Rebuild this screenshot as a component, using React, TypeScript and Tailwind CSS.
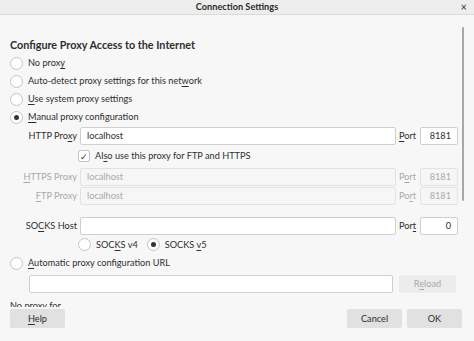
import type { ReactNode } from "react"

const U = ({ children }: { children: ReactNode }) => <span className="underline underline-offset-[2px]">{children}</span>

const Radio = ({ checked = false }: { checked?: boolean }) => (
  <span className="flex h-[13px] w-[13px] shrink-0 items-center justify-center rounded-full border border-[#c4c4c4] bg-white">
    {checked && <span className="h-[5px] w-[5px] rounded-full bg-[#333]" />}
  </span>
)

const Field = ({ value = "", disabled = false, align = "left" }: { value?: string; disabled?: boolean; align?: "left" | "right" }) => (
  <div
    className={`flex h-[18px] items-center rounded-[2px] border px-[6px] ${
      disabled ? "border-[#e2e2e2] bg-[#f6f6f6] text-[#a9a9a9]" : "border-[#cfcfcf] bg-white text-[#2e2e2e]"
    } ${align === "right" ? "justify-end" : ""}`}
  >
    {value}
  </div>
)

const ProxyRow = ({ label, value, port, disabled = false, portKey }: { label: ReactNode; value: string; port: string; disabled?: boolean; portKey: ReactNode }) => (
  <div className="flex h-[18px] items-center">
    <div className={`w-[67px] text-right ${disabled ? "text-[#a9a9a9]" : ""}`}>{label}</div>
    <div className="ml-[3px] flex-1">
      <Field value={value} disabled={disabled} />
    </div>
    <div className={`ml-[3px] w-[18px] ${disabled ? "text-[#a9a9a9]" : ""}`}>{portKey}</div>
    <div className="ml-[3px] w-[38px]">
      <Field value={port} disabled={disabled} align="right" />
    </div>
  </div>
)

const Option = ({ checked = false, children, className = "" }: { checked?: boolean; children: ReactNode; className?: string }) => (
  <label className={`flex h-[18px] items-center gap-[5px] ${className}`}>
    <Radio checked={checked} />
    <span>{children}</span>
  </label>
)

export default function App() {
  return (
    <div className="flex h-[341px] w-[474px] flex-col bg-[#f7f7f7] text-[9.2px] text-[#2e2e2e]" style={{ fontFamily: 'Lato, "Noto Sans", sans-serif' }}>
      <div className="relative flex h-[15px] shrink-0 items-center justify-center border-b border-[#dadada] bg-[#ededed]">
        <span className="font-bold text-[#2a2a2a]">Connection Settings</span>
        <span className="absolute right-[7px] top-[0px] text-[11px] leading-[14px] text-[#333]">×</span>
      </div>

      <div className="relative flex-1 overflow-hidden pl-[10px] pr-[16px]">
        <div className="absolute right-[10px] top-[12px] h-[174px] w-[2px] rounded bg-[#a8a8a8]" />
        <div className="mt-[23px] h-[14px] text-[10.8px] font-bold leading-[14px]">Configure Proxy Access to the Internet</div>

        <div className="mt-[2px] flex flex-col">
          <Option>No prox<U>y</U></Option>
          <Option>Auto-detect proxy settings for this net<U>w</U>ork</Option>
          <Option><U>U</U>se system proxy settings</Option>
          <Option checked><U>M</U>anual proxy configuration</Option>
        </div>

        <div className="mt-[1px]">
          <ProxyRow label={<>HTTP Pro<U>x</U>y</>} value="localhost" port="8181" portKey={<><U>P</U>ort</>} />
        </div>
        <div className="mt-[2px] flex h-[18px] items-center pl-[68px]">
          <span className="flex h-[12px] w-[12px] items-center justify-center rounded-[2px] border border-[#c4c4c4] bg-white text-[9px] leading-none">✓</span>
          <span className="ml-[5px]">Al<U>s</U>o use this proxy for FTP and HTTPS</span>
        </div>
        <div className="mt-[3px] flex flex-col gap-[1px]">
          <ProxyRow disabled label={<><U>H</U>TTPS Proxy</>} value="localhost" port="8181" portKey={<>P<U>o</U>rt</>} />
          <ProxyRow disabled label={<><U>F</U>TP Proxy</>} value="localhost" port="8181" portKey={<>Po<U>r</U>t</>} />
        </div>
        <div className="mt-[12px]">
          <ProxyRow label={<>SO<U>C</U>KS Host</>} value="" port="0" portKey={<>Por<U>t</U></>} />
        </div>
        <div className="mt-[1px] flex h-[17px] items-center pl-[68px]">
          <Option className="h-[17px]">SOC<U>K</U>S v4</Option>
          <Option checked className="ml-[9px] h-[17px]">SOCKS <U>v</U>5</Option>
        </div>
        <Option className="mt-[1px]"><U>A</U>utomatic proxy configuration URL</Option>
        <div className="mt-[3px] flex items-center">
          <div className="ml-[19px] flex-1"><Field value="" /></div>
          <div className="ml-[6px] flex h-[18px] w-[57px] items-center justify-center rounded-[2px] bg-[#ececec] text-[#a9a9a9]"><span>R<U>e</U>load</span></div>
          <div className="w-[2px]" />
        </div>
        <div className="mt-[6px]">No proxy for</div>
      </div>

      <div className="flex h-[34px] shrink-0 items-start justify-between bg-[#f7f7f7] pl-[10px] pr-[12px] pt-[2px]">
        <button className="flex h-[19px] w-[55px] items-center justify-center rounded-[2px] bg-[#e1e1e1]"><span><U>H</U>elp</span></button>
        <div className="flex gap-[5px]">
          <button className="flex h-[19px] w-[55px] items-center justify-center rounded-[2px] bg-[#e1e1e1]">Cancel</button>
          <button className="flex h-[19px] w-[55px] items-center justify-center rounded-[2px] bg-[#e1e1e1]">OK</button>
        </div>
      </div>
    </div>
  )
}
